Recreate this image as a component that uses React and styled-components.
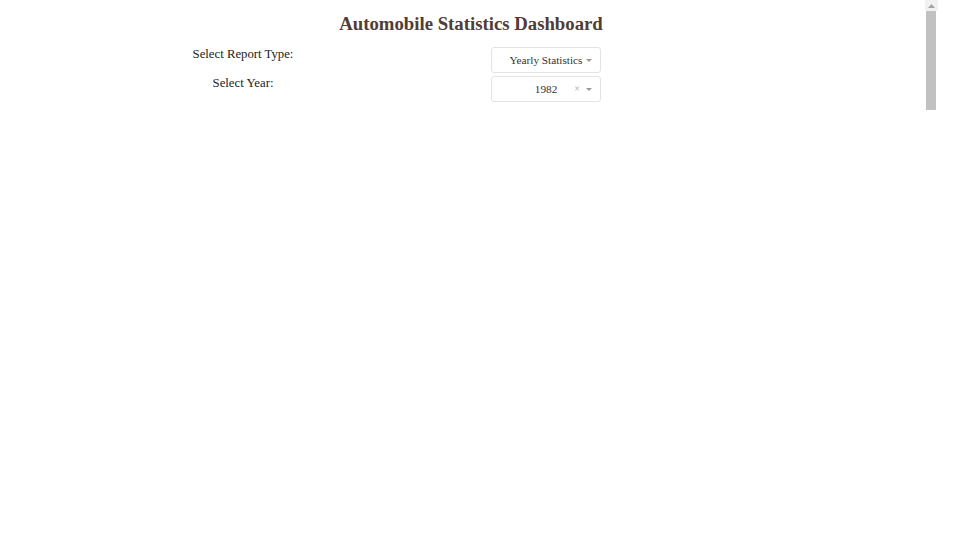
import React from "react";
import styled, { createGlobalStyle } from "styled-components";

const Global = createGlobalStyle`
  html, body { margin: 0; padding: 0; background: #fff; overflow: hidden; }
  body { font-family: "Liberation Serif", "Times New Roman", serif; }
`;

const Frame = styled.div`
  width: 960px;
  height: 540px;
  display: flex;
  background: #fff;
`;

const Page = styled.div`
  width: 925px;
  flex: none;
`;

const ScrollBar = styled.div`
  width: 13px;
  flex: none;
  display: flex;
  flex-direction: column;
  background: #fff;
`;

const ScrollButton = styled.div`
  height: 11px;
  display: flex;
  align-items: center;
  justify-content: center;
  background: #f1f1f1;
`;

const Thumb = styled.div`
  height: 99px;
  margin: 0 2px 0 1px;
  background: #c1c1c1;
`;

const Title = styled.h1`
  margin: 0;
  padding: 11px 0 0 17px;
  text-align: center;
  color: #503d36;
  font-size: 18.75px;
  font-weight: bold;
  line-height: 26px;
`;

const Controls = styled.div`
  display: grid;
  grid-template-columns: 150px 173px 110px;
  row-gap: 3px;
  padding-left: 168px;
  margin-top: 10px;
`;

const Label = styled.label`
  text-align: center;
  font-size: 12.75px;
  line-height: 15px;
  color: #222;
`;

const Select = styled.div`
  box-sizing: border-box;
  height: 26px;
  border: 1px solid #e3e3e3;
  border-radius: 3px;
  display: flex;
  align-items: center;
  position: relative;
  font-size: 11.25px;
  color: #333;
  padding: 0 4px;
`;

const Value = styled.span`
  flex: 1;
  text-align: center;
  white-space: nowrap;
`;

const Clear = styled.span`
  position: absolute;
  right: 20px;
  top: 50%;
  transform: translateY(-50%);
  color: #aaa;
  font-size: 10px;
  line-height: 10px;
`;

const Caret = styled.span`
  position: absolute;
  right: 8px;
  top: 50%;
  margin-top: -1px;
  width: 0;
  height: 0;
  border-left: 3px solid transparent;
  border-right: 3px solid transparent;
  border-top: 3px solid #999;
`;

function Dropdown({ value, clearable }) {
  return (
    <Select>
      <Value>{value}</Value>
      {clearable && <Clear>×</Clear>}
      <Caret />
    </Select>
  );
}

export default function App() {
  return (
    <>
      <Global />
      <Frame>
        <Page>
          <Title>Automobile Statistics Dashboard</Title>
          <Controls>
            <Label>Select Report Type:</Label>
            <span />
            <Dropdown value="Yearly Statistics" />
            <Label>Select Year:</Label>
            <span />
            <Dropdown value="1982" clearable />
          </Controls>
        </Page>
        <ScrollBar>
          <ScrollButton>
            <svg width="7" height="4" viewBox="0 0 7 4">
              <path d="M0 4 L3.5 0 L7 4 Z" fill="#a3a3a3" />
            </svg>
          </ScrollButton>
          <Thumb />
        </ScrollBar>
      </Frame>
    </>
  );
}
